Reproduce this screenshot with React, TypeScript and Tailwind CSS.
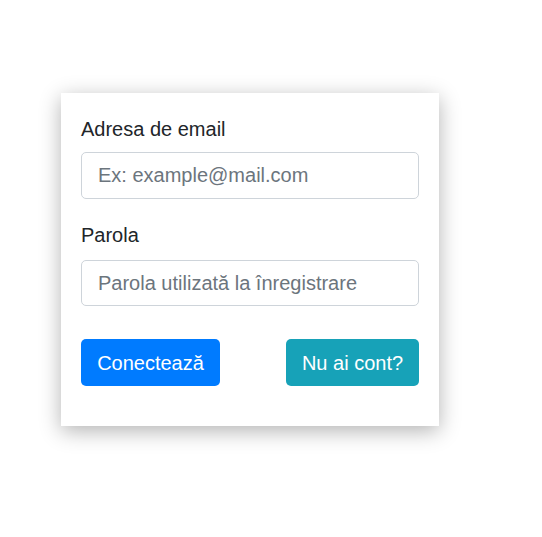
export default function App() {
  return (
    <div
      className="w-[542px] h-[537px] bg-white pt-[93px] pl-[61px]"
      style={{ fontFamily: '"Liberation Sans", Arial, sans-serif' }}
    >
      <form className="w-[378px] bg-white px-5 pt-[21px] pb-[40px] shadow-[0_5px_20px_rgba(0,0,0,0.3)]">
        {/* Email */}
        <label className="block text-[20px] leading-[30px] text-[#212529]">
          Adresa de email
        </label>
        <input
          type="email"
          placeholder="Ex: example@mail.com"
          className="mt-2 block w-full h-[47px] rounded-[5px] border border-[#ced4da] px-4 text-[20px] text-[#495057] placeholder:text-[#6c757d] outline-none"
        />

        {/* Parola */}
        <label className="mt-[21px] block text-[20px] leading-[30px] text-[#212529]">
          Parola
        </label>
        <input
          type="password"
          placeholder="Parola utilizată la înregistrare"
          className="mt-[10px] block w-full h-[46px] rounded-[5px] border border-[#ced4da] px-4 text-[20px] text-[#495057] placeholder:text-[#6c757d] outline-none"
        />

        <div className="mt-[33px] flex items-center justify-between">
          <button
            type="button"
            className="h-[47px] w-[139px] rounded-[5px] bg-[#007bff] text-[20px] text-white"
          >
            Conectează
          </button>
          <button
            type="button"
            className="h-[47px] w-[133px] rounded-[5px] bg-[#17a2b8] text-[20px] text-white"
          >
            Nu ai cont?
          </button>
        </div>
      </form>
    </div>
  );
}
